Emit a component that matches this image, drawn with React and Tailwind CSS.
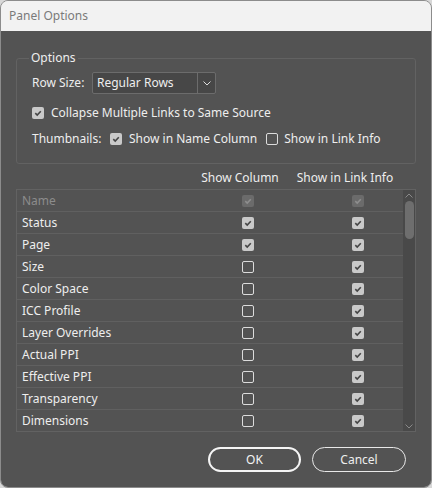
import React from 'react';

const rows = [
  { name: 'Name', col: true, info: true, disabled: true },
  { name: 'Status', col: true, info: true },
  { name: 'Page', col: true, info: true },
  { name: 'Size', col: false, info: true },
  { name: 'Color Space', col: false, info: true },
  { name: 'ICC Profile', col: false, info: true },
  { name: 'Layer Overrides', col: false, info: true },
  { name: 'Actual PPI', col: false, info: true },
  { name: 'Effective PPI', col: false, info: true },
  { name: 'Transparency', col: false, info: true },
  { name: 'Dimensions', col: false, info: true },
];

const Check = ({ checked, disabled }) => {
  if (!checked) {
    return <span className="block w-[12px] h-[12px] rounded-[2px] border border-[#dcdcdc] shrink-0" />;
  }
  return (
    <span
      className={`flex items-center justify-center w-[12px] h-[12px] rounded-[2px] shrink-0 ${
        disabled ? 'bg-[#6b6b6b]' : 'bg-[#c9c9c9]'
      }`}
    >
      <svg width="10" height="10" viewBox="0 0 10 10">
        <path
          d="M2.3 5.2 L4.2 7 L7.8 3.2"
          fill="none"
          stroke={disabled ? '#8e8e8e' : '#454545'}
          strokeWidth="1.6"
        />
      </svg>
    </span>
  );
};

const Chevron = ({ up, color = '#bdbdbd' }) => (
  <svg width="8" height="5" viewBox="0 0 8 5">
    <path d={up ? 'M0.5 4.5 L4 1 L7.5 4.5' : 'M0.5 0.5 L4 4 L7.5 0.5'} fill="none" stroke={color} strokeWidth="1" />
  </svg>
);

export default function App() {
  return (
    <div
      className="w-[432px] h-[488px] bg-[#d8d8d8] text-[12px] text-[#eeeeee]"
      style={{ fontFamily: '"Noto Sans", "Open Sans", sans-serif' }}
    >
      <div className="flex flex-col h-full rounded-[8px] overflow-hidden border border-[#8c8c8c]">
        {/* Title bar */}
        <div className="h-[30px] shrink-0 bg-[#f2f2f2] flex items-center pl-[8px] text-[#7a7a7a]">Panel Options</div>

        {/* Body */}
        <div className="flex-1 bg-[#535353] px-[15px] pt-[19px]">
          <fieldset className="border border-[#626262] rounded-[3px] px-[15px] pb-[16px]">
            <legend className="px-[2px] -ml-[3px] leading-[16px]">Options</legend>

            <div className="flex items-center h-[22px] mt-[6px]">
              <span className="w-[60px]">Row Size:</span>
              <div className="flex items-center h-[22px] w-[124px] bg-[#474747] border border-[#6c6c6c] rounded-[2px]">
                <span className="flex-1 pl-[4px]">Regular Rows</span>
                <span className="flex items-center justify-center w-[18px] h-full border-l border-[#6c6c6c]">
                  <Chevron color="#dddddd" />
                </span>
              </div>
            </div>

            <div className="flex items-center h-[16px] mt-[11px] gap-[7px]">
              <Check checked />
              <span>Collapse Multiple Links to Same Source</span>
            </div>

            <div className="flex items-center h-[16px] mt-[10px]">
              <span className="w-[78px]">Thumbnails:</span>
              <Check checked />
              <span className="ml-[7px]">Show in Name Column</span>
              <span className="ml-[9px]"><Check /></span>
              <span className="ml-[6px]">Show in Link Info</span>
            </div>
          </fieldset>

          {/* Column headers */}
          <div className="flex items-center h-[25px] pt-[3px] pl-[169px]">
            <span className="w-[110px] text-center">Show Column</span>
            <span className="w-[100px] text-center">Show in Link Info</span>
          </div>

          {/* Table */}
          <div className="flex border border-[#626262] h-[243px] overflow-hidden">
            <div className="flex-1">
              {rows.map((r) => (
                <div key={r.name} className="flex items-center h-[22px] border-b border-[#606060]">
                  <span className={`w-[225px] pl-[5px] ${r.disabled ? 'text-[#8c8c8c]' : ''}`}>{r.name}</span>
                  <Check checked={r.col} disabled={r.disabled} />
                  <span className="ml-[98px]">
                    <Check checked={r.info} disabled={r.disabled} />
                  </span>
                </div>
              ))}
            </div>
            <div className="w-[12px] bg-[#494949] flex flex-col items-center">
              <div className="h-[10px] flex items-center"><Chevron up color="#8a8a8a" /></div>
              <div className="w-[9px] h-[38px] rounded-full bg-[#6e6e6e] mt-[1px]" />
              <div className="flex-1" />
              <div className="h-[10px] flex items-center"><Chevron color="#8a8a8a" /></div>
            </div>
          </div>

          {/* Buttons */}
          <div className="flex justify-end gap-[11px] pr-[10px] mt-[15px]">
            <button className="w-[93px] h-[25px] rounded-full border-2 border-[#f5f5f5] text-[#f5f5f5]">OK</button>
            <button className="w-[94px] h-[25px] rounded-full border border-[#e8e8e8] text-[#eeeeee]">Cancel</button>
          </div>
        </div>
      </div>
    </div>
  );
}
